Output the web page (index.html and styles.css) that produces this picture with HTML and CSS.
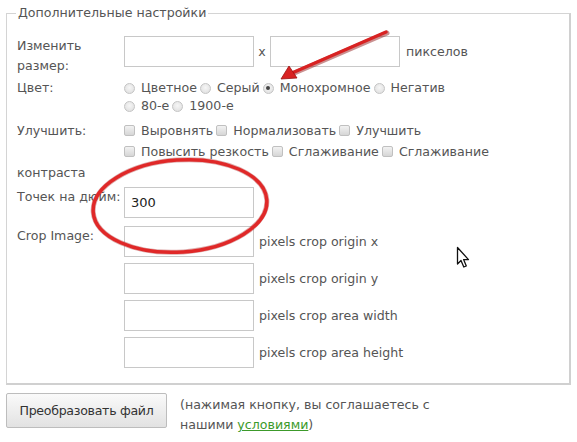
FILE: index.html
```html
<!DOCTYPE html>
<html>
<head>
<meta charset="utf-8">
<link rel="stylesheet" href="styles.css">
</head>
<body>
<div class="page">
  <fieldset class="opts">
    <legend>Дополнительные настройки</legend>
    <div class="row r-size">
      <div class="lbl">Изменить размер:</div>
      <div class="val inline">
        <input class="txt" type="text"><span class="x">x</span><input class="txt" type="text"><span class="unit">пикселов</span>
      </div>
    </div>
    <div class="row r-color">
      <div class="lbl">Цвет:</div>
      <div class="val choices">
        <label><span class="radio"></span>Цветное</label>
        <label><span class="radio"></span>Серый</label>
        <label><span class="radio on"></span>Монохромное</label>
        <label><span class="radio"></span>Негатив</label>
        <span class="break"></span>
        <label><span class="radio"></span>80-е</label>
        <label><span class="radio"></span>1900-е</label>
      </div>
    </div>
    <div class="row r-enh">
      <div class="lbl">Улучшить:</div>
      <div class="val choices">
        <label><span class="check"></span>Выровнять</label>
        <label><span class="check"></span>Нормализовать</label>
        <label><span class="check"></span>Улучшить</label>
        <span class="break"></span>
        <label><span class="check"></span>Повысить резкость</label>
        <label><span class="check"></span>Сглаживание</label>
        <label><span class="check"></span>Сглаживание</label>
      </div>
    </div>
    <div class="overflow">контраста</div>
    <div class="row r-dpi">
      <div class="lbl">Точек на дюйм:</div>
      <div class="val"><input class="txt" type="text" value="300"></div>
    </div>
    <div class="row r-crop">
      <div class="lbl">Crop Image:</div>
      <div class="val stack">
        <div class="inline"><input class="txt" type="text"><span class="unit2">pixels crop origin x</span></div>
        <div class="inline"><input class="txt" type="text"><span class="unit2">pixels crop origin y</span></div>
        <div class="inline"><input class="txt" type="text"><span class="unit2">pixels crop area width</span></div>
        <div class="inline"><input class="txt" type="text"><span class="unit2">pixels crop area height</span></div>
      </div>
    </div>
  </fieldset>
  <div class="submit">
    <button class="btn" type="button">Преобразовать файл</button>
    <p class="note">(нажимая кнопку, вы соглашаетесь с<br>нашими <a href="#">условиями</a>)</p>
  </div>

  <svg class="annot" width="577" height="442" viewBox="0 0 577 442">
    <g fill="none" stroke-linecap="round">
      <ellipse cx="180" cy="206" rx="87" ry="46" transform="rotate(-4 180 206)" stroke="#a01010" stroke-width="5" opacity="0.35"/>
      <ellipse cx="180" cy="206" rx="87" ry="46" transform="rotate(-4 180 206)" stroke="#e02828" stroke-width="3.5"/>
      <line x1="387" y1="33" x2="292" y2="74" stroke="#8a0c0c" stroke-width="5" opacity="0.45"/>
      <line x1="386" y1="32" x2="292" y2="73" stroke="#d82222" stroke-width="3.5"/>
    </g>
    <polygon points="281,79 289,66 297,78" fill="#d82222" stroke="#9a1010" stroke-width="0.8"/>
    <path d="M457.5 247.5 L457.5 264 L461 260.5 L463.8 267 L466.3 266 L463.6 259.6 L468.5 259.6 Z" fill="#fff" stroke="#111" stroke-width="1.3" stroke-linejoin="round"/>
  </svg>
</div>
</body>
</html>
```
FILE: styles.css
```css
html, body {
  margin: 0;
  padding: 0;
  background: #fff;
}
body {
  font-family: "DejaVu Sans", Verdana, sans-serif;
  font-size: 12.6px;
  color: #555;
}
.page {
  position: relative;
  width: 577px;
  height: 442px;
  overflow: hidden;
}
.opts {
  margin: 4px 0 0 6px;
  width: 565px;
  box-sizing: border-box;
  border-style: solid;
  border-width: 1px 2px 2px 1px;
  border-color: #d4d4d4 #d0d0d0 #d0d0d0 #d4d4d4;
  padding: 14px 10px 15px 10px;
  min-width: 0;
}
.opts legend {
  padding: 0 2px;
  margin-left: -1px;
  line-height: 18px;
  color: #555;
}
.row {
  display: flex;
  align-items: flex-start;
}
.lbl {
  width: 107px;
  flex: none;
  line-height: 20px;
}
.val {
  flex: 1;
  min-width: 0;
}
.inline {
  display: flex;
  align-items: center;
}
.txt {
  width: 130px;
  height: 31px;
  box-sizing: border-box;
  border: 1px solid #c8c8c8;
  margin: 0;
  padding: 0 6px;
  font-family: inherit;
  font-size: 12.6px;
  color: #333;
  background: #fff;
  outline: none;
}
.x {
  width: 16px;
  text-align: center;
}
.unit {
  margin-left: 6px;
}
.unit2 {
  margin-left: 5px;
}
.r-size {
  height: 43px;
}
.r-size .lbl {
  width: 80px;
  margin-right: 27px;
}
.choices {
  display: flex;
  flex-wrap: wrap;
  column-gap: 3px;
}
.choices .break {
  flex-basis: 100%;
  height: 0;
}
.choices label {
  display: inline-flex;
  align-items: center;
  white-space: nowrap;
}
.r-color .lbl,
.r-color .choices label {
  line-height: 18px;
}
.r-enh {
  margin-top: 5px;
}
.r-enh .lbl,
.r-enh .choices label {
  line-height: 21px;
}
.radio {
  width: 11px;
  height: 11px;
  border-radius: 50%;
  box-sizing: border-box;
  border: 1px solid #c4c4c4;
  background: radial-gradient(circle at 50% 40%, #f6f6f6 0, #dcdcdc 100%);
  margin-right: 6px;
  position: relative;
}
.radio.on::after {
  content: "";
  position: absolute;
  left: 2.5px;
  top: 2.5px;
  width: 4px;
  height: 4px;
  border-radius: 50%;
  background: #444;
}
.check {
  width: 11px;
  height: 11px;
  box-sizing: border-box;
  border: 1px solid #c0c0c0;
  border-radius: 2px;
  background: linear-gradient(#f2f2f2, #d6d6d6);
  margin-right: 6px;
}
.overflow {
  line-height: 21px;
}
.r-dpi {
  margin-top: 4px;
}
.r-dpi .lbl {
  line-height: 20px;
}
.r-dpi .txt {
  font-size: 13px;
  color: #222;
}
.r-crop {
  margin-top: 8px;
}
.stack {
  display: flex;
  flex-direction: column;
  gap: 6px;
}
.submit {
  display: flex;
  align-items: flex-start;
  margin: 8px 0 0 6px;
}
.btn {
  width: 161px;
  height: 35px;
  margin: 0;
  border: 1px solid #bdbdbd;
  border-radius: 2px;
  background: linear-gradient(#fafafa, #e2e2e2);
  font-family: "DejaVu Sans", Verdana, sans-serif;
  font-size: 12.6px;
  color: #333;
  letter-spacing: -0.3px;
  padding: 0;
}
.note {
  margin: 2px 0 0 13px;
  line-height: 20px;
}
.note a {
  color: #3c9a2a;
}
.annot {
  position: absolute;
  left: 0;
  top: 0;
  pointer-events: none;
}
```
